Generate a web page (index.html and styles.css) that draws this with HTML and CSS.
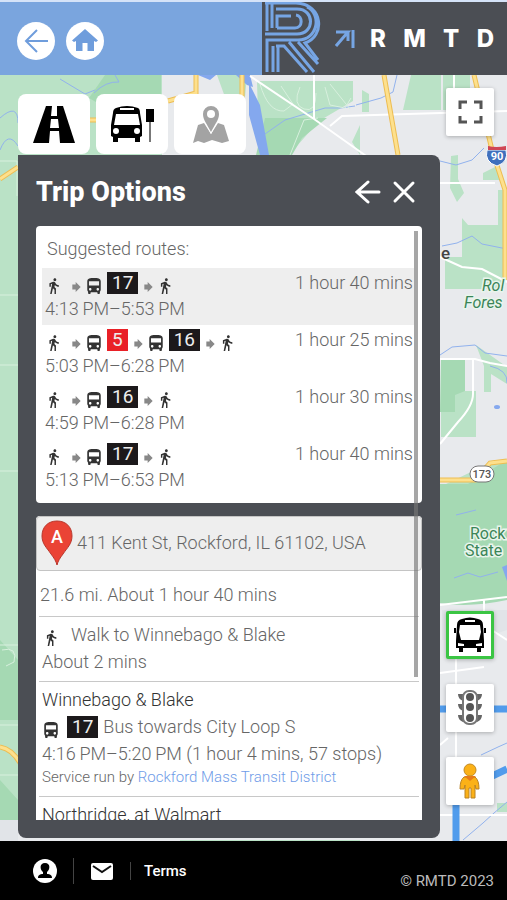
FILE: index.html
```html
<!DOCTYPE html>
<html lang="en">
<head>
<meta charset="utf-8">
<meta name="viewport" content="width=device-width, initial-scale=1">
<title>RMTD Trip Options</title>
<link rel="stylesheet" href="styles.css">
</head>
<body>
<svg class="sprite" aria-hidden="true">
  <symbol id="walk" viewBox="6 1 14 22"><path d="M13.5 5.500c1.100 0 2-.9 2-2s-.9-2-2-2-2 .9-2 2 .9 2 2 2zM9.800 8.900 7 23h2.100l1.800-8 2.100 2v6h2v-7.500l-2.100-2 .6-3C14.800 12 16.800 13 19 13v-2c-1.900 0-3.500-1-4.300-2.400l-1-1.600c-.4-.6-1-1-1.700-1-.3 0-.5.1-.8.1L6 8.300V13h2V9.600l1.800-.7z"/></symbol>
  <symbol id="bus" viewBox="4 2 16 19"><path d="M4 16c0 .88.39 1.670 1 2.220V20c0 .55.45 1 1 1h1c.55 0 1-.45 1-1v-1h8v1c0 .55.45 1 1 1h1c.55 0 1-.45 1-1v-1.780c.61-.55 1-1.340 1-2.220V6c0-3.500-3.580-4-8-4s-8 .5-8 4v10zm3.500 1c-.83 0-1.500-.67-1.500-1.500S6.670 14 7.500 14s1.500.67 1.500 1.500S8.330 17 7.500 17zm9 0c-.83 0-1.500-.67-1.500-1.500s.67-1.500 1.500-1.500 1.500.67 1.500 1.500-.67 1.500-1.500 1.500zm1.500-6H6V6h12v5z"/></symbol>
  <symbol id="next" viewBox="0 0 10 12"><path d="M0 3h4V0l6 6-6 6V9H0z"/></symbol>
</svg>

<header class="topbar">
  <nav class="topnav">
    <button class="round" aria-label="Back"><svg viewBox="0 0 38 38"><path class="line" d="M31 19H9M20 8 9 19l11 11"/></svg></button>
    <button class="round" aria-label="Home"><svg viewBox="0 0 38 38"><path d="M19 7 32 18.500 30 20l-2-1v10h-6.500v-8h-5v8H10V19l-2 1-2-1.500z"/></svg></button>
  </nav>
  <div class="brand">
    <svg class="brand-mark" viewBox="0 0 60 73" aria-hidden="true">
      <path d="M5 0v29M10 0v26M3 1h31c28 1 29 34 9 40l13 17M14 7h21c18 0 18 25 0 25H3M15 26V14h14M15 26h18c8 0 8-12 1-13M5 70V38h31c20 0 24-26 9-33M11 70V44M16 70V44M14 44h8l23 26M27 40l25 30M36 40l20 22"/>
    </svg>
    <svg class="brand-arrow" viewBox="0 0 20 20" aria-hidden="true"><path d="M1 3h12L1 17M18 1v18M13 3v9"/></svg>
    <div class="brand-name"><span>R</span><span>M</span><span>T</span><span>D</span></div>
  </div>
</header>

<main class="stage">
  <svg class="map" viewBox="0 75 507 766" preserveAspectRatio="xMinYMin slice" aria-hidden="true">
    <rect y="75" width="507" height="766" fill="#e8eaed"/>
    <path class="park" d="M0 75h162v95H0zM0 150h18v670H0zM217 75h30l-2 22h-20zM257 81h96v20l-34 20-30 34h-30zM362 90l7 4v18h-7zM411 75h30v35h-38zM443 75h27v35h-27zM352 142l8-17v30zM451 156l7-1v24l6 14-7 9-7-14zM462 218l6 7h35v64h-58v-32h17zM483 173l16-8v15h-16zM498 190h9v35h-9zM441 391h35v46h-35zM476 345l31 22v17l-16-10v18h-7v-26zM446 484l50-24h11v25h-67zM180 840h180v3H180zM497 803h10v9h-10z"/>
    <path class="wood" d="M105 75h56v30h-60l-12-7zM265 118h62l-25 20-10 17h-36zM441 360h24v31l-10 4v17h-15zM440 484h28l39-24v140q-38 8-67 3zM0 780l18 20v20H0zM0 640l18 20v60H0z"/>
    <path fill="#e1e4e8" d="M0 820h18v21H0zM442 610h65v20l-30 10h-35z"/>
    <path class="water" d="M94 93q12-12 25-11l-4-7M60 79l25 15 10-4M0 118q18-16 18 5M0 150q8-20 18-4M355 106q-14 3-30 2l-40 12-20 14M356 105l25-7 12-6 4-17M440 161l16 4 16-5 12-12M442 246l15-3 15-7 10 8 25 5M440 355l12-8 23-2 10 8 22 3M490 366q18 4 17 17M454 578l14-5 12 4 18-5M456 515l20-5M481 755l17-8 9-4M463 840l20-17 11-10 13-11"/>
    <path fill="#84a8ee" d="M198 75h18l-6 5zM236 75h14l3 12-6-2zM249 83l11 22 9 50h-9l-11-40zM502 567l5-2v16z"/>
    <ellipse cx="497" cy="407" rx="3" ry="2" fill="#84a8ee"/>
    <path class="faint" d="M0 161h17v35M0 295h18M0 365h18M0 471h18M0 645h18M0 725h18M0 775h18M260 84q8 28 24 27l9-7-12-18M300 87q-8 18 4 22t12-16M325 87l5 18 15 3 6-10M290 155l14-35 14-2M330 84l20 25M2 650q16-4 12 12l-8 4"/>
    <path class="road" d="M250 76l64 43 55 39M314 119v-44M330 126l12-10 165-5M454 75v20M440 183h55M440 257l22 10 20 2 25 13M440 359h35l15 4 17 3M473 359v35q0 12-15 28l-18 22M440 605l67-8M440 673l44-6M456 657v183M440 815h67M440 745l8-7M484 600v25l23 15"/>
    <path class="hwy-edge" d="M196 75v18l-28 8M242 75v24M384 75l14 80M474 75l18 75 13 40v90M0 179l18-12M90 195h6M0 747q12 2 20 16M440 480h35l15-17 17-2M88 120h10"/>
    <path class="hwy" d="M196 75v18l-28 8M242 75v24M384 75l14 80M474 75l18 75 13 40v90M0 179l18-12M0 747q12 2 20 16M440 480h35l15-17 17-2M88 120h10"/>
    <path class="transit" d="M440 709h67M456 841v-50l30-12 21-10"/>
    <path fill="#3f70bd" stroke="#fff" d="M487 150h19q3 12-9 16-13-4-10-16z"/>
    <path fill="#cf4654" d="M488 146q8 2 18 0v4h-18z"/>
    <text class="shield" x="497" y="160">90</text>
    <rect x="470" y="466" width="24" height="16" rx="8" fill="#fff" stroke="#777" stroke-width="1"/>
    <text class="route-no" x="482" y="478">173</text>
    <text class="town" x="441" y="259">e</text>
    <text class="place italic" x="482" y="291">Rol</text>
    <text class="place italic" x="464" y="308">Fores</text>
    <text class="place" x="470" y="539">Rock</text>
    <text class="place" x="465" y="556">State</text>
  </svg>

  <div class="workspace">
    <div class="tabs">
      <button class="tab" aria-label="Directions"><svg viewBox="0 0 72 60"><path d="M28 12h17l12 37H15z"/><path class="white" d="M34 12h5v10h-6zM33 25h7l1 9h-9zM32 37h9l1 12H31z"/></svg></button>
      <button class="tab" aria-label="Stops"><svg viewBox="0 0 72 60"><path d="M20 14q11-4 22 0 2 1 2 5l2 12v11l-2 1v5h-5v-4H22v4h-5v-5l-2-1V31l2-12q0-4 3-5z"/><path class="white" d="M24 14h14v2H24zM20 20h22l2 11H18z"/><circle class="white" cx="20" cy="37" r="3"/><circle class="white" cx="41" cy="37" r="3"/><path d="M50 15h8v13h-8z"/><path class="pole" d="M54 28v20"/></svg></button>
      <button class="tab muted" aria-label="Nearby"><svg viewBox="0 0 72 60"><path d="m24 31 6-2 7 11 7-11 6 2 5 16-7 2-10-3-8 3-6-2-5 2z"/><path class="halo" d="M37 12a8 8 0 0 0-8 8c0 6 4 10 8 18 4-8 8-12 8-18a8 8 0 0 0-8-8z"/><circle class="white" cx="37" cy="20" r="4"/></svg></button>
    </div>

    <section class="panel">
      <div class="panel-head">
        <h1>Trip Options</h1>
        <button class="plain" aria-label="Back to search"><svg viewBox="0 0 26 26"><path d="M24 13H3M13 3 2 13l11 10"/></svg></button>
        <button class="plain" aria-label="Close"><svg viewBox="0 0 26 26"><path d="m4 4 18 18M22 4 4 22"/></svg></button>
      </div>

      <div class="results">
        <div class="card routes">
          <h2>Suggested routes:</h2>
          <ul>
            <li class="route selected">
              <div class="legs"><svg class="i first"><use href="#walk"/></svg><svg class="arrow"><use href="#next"/></svg><svg class="i"><use href="#bus"/></svg><b class="line-no">17</b><svg class="arrow"><use href="#next"/></svg><svg class="i"><use href="#walk"/></svg><span class="duration">1 hour 40 mins</span></div>
              <div class="times">4:13&#8201;PM–5:53&#8201;PM</div>
            </li>
            <li class="route">
              <div class="legs"><svg class="i first"><use href="#walk"/></svg><svg class="arrow"><use href="#next"/></svg><svg class="i"><use href="#bus"/></svg><b class="line-no red">5</b><svg class="arrow"><use href="#next"/></svg><svg class="i"><use href="#bus"/></svg><b class="line-no">16</b><svg class="arrow"><use href="#next"/></svg><svg class="i"><use href="#walk"/></svg><span class="duration">1 hour 25 mins</span></div>
              <div class="times">5:03&#8201;PM–6:28&#8201;PM</div>
            </li>
            <li class="route">
              <div class="legs"><svg class="i first"><use href="#walk"/></svg><svg class="arrow"><use href="#next"/></svg><svg class="i"><use href="#bus"/></svg><b class="line-no">16</b><svg class="arrow"><use href="#next"/></svg><svg class="i"><use href="#walk"/></svg><span class="duration">1 hour 30 mins</span></div>
              <div class="times">4:59&#8201;PM–6:28&#8201;PM</div>
            </li>
            <li class="route">
              <div class="legs"><svg class="i first"><use href="#walk"/></svg><svg class="arrow"><use href="#next"/></svg><svg class="i"><use href="#bus"/></svg><b class="line-no">17</b><svg class="arrow"><use href="#next"/></svg><svg class="i"><use href="#walk"/></svg><span class="duration">1 hour 40 mins</span></div>
              <div class="times">5:13&#8201;PM–6:53&#8201;PM</div>
            </li>
          </ul>
        </div>

        <div class="card steps">
          <div class="address">
            <svg class="pin" viewBox="0 0 32 46" aria-hidden="true"><path d="M16 1C7 1 1 7 1 16c0 8 5 12 9 18 3 4 5 7 6 11 1-4 3-7 6-11 4-6 9-10 9-18 0-9-6-15-15-15z"/><text x="16" y="23">A</text></svg>
            <span>411 Kent St, Rockford, IL 61102, USA</span>
          </div>
          <p class="summary">21.6 mi. About 1 hour 40 mins</p>
          <div class="step">
            <div class="step-line"><svg class="i step-walk"><use href="#walk"/></svg><span>Walk to Winnebago &amp; Blake</span></div>
            <div class="step-line">About 2 mins</div>
          </div>
          <div class="step">
            <div class="step-line stop">Winnebago &amp; Blake</div>
            <div class="step-line"><svg class="i step-bus"><use href="#bus"/></svg><b class="line-no">17</b><span>Bus towards City Loop S</span></div>
            <div class="step-line">4:16&#8201;PM–5:20&#8201;PM (1 hour 4 mins, 57 stops)</div>
            <div class="agency">Service run by <a href="#agency">Rockford Mass Transit District</a></div>
          </div>
          <div class="step">
            <div class="step-line stop">Northridge, at Walmart</div>
          </div>
        </div>
        <div class="thumb"></div>
      </div>
    </section>
  </div>

  <div class="controls">
    <button class="control" aria-label="Full screen"><svg viewBox="0 0 48 48"><path class="corners" d="M14 21v-7h7M28 14h7v7M35 28v6h-7M21 34h-7v-6"/></svg></button>
    <button class="control live" aria-label="Live buses"><svg viewBox="0 0 42 42"><path d="M13 5q8-3 16 0 5 1 5 6l1 16v7h-3v4h-4v-4H14v4h-4v-4H7v-7l1-16q0-5 5-6zM5 14h2v5H5zM35 14h2v5h-2z"/><path class="white" d="M16 6h10v2H16zM11 11h20l1 7-2 8H12l-2-8zM9 29l6 1v2H9zM33 29l-6 1v2h6z"/></svg></button>
    <button class="control" aria-label="Traffic"><svg viewBox="0 0 48 48"><path fill="#666" d="M12 10h24q0 5-5 7H17q-5-2-5-7zM12 20h24q0 5-5 7H17q-5-2-5-7zM12 31h24q0 5-5 7H17q-5-2-5-7z"/><rect x="17" y="7" width="14" height="33" rx="6" fill="#fff" stroke="#777" stroke-width="2"/><g fill="#555"><circle cx="24" cy="13" r="4"/><circle cx="24" cy="23" r="4"/><circle cx="24" cy="34" r="4"/></g></svg></button>
    <button class="control" aria-label="Street view"><svg viewBox="0 0 48 48"><path fill="#fbb117" stroke="#b98225" d="M18 20h11q4 3 4 12h-3l-1-4v13h-4V31h-2v10h-4V28l-1 4h-4q0-9 4-12z"/><circle cx="24" cy="13" r="6" fill="#fbb117" stroke="#c28a24"/><path fill="#e77a18" d="m18 19 6 5 6-5z"/></svg></button>
  </div>
</main>

<footer class="footer">
  <a href="#account" aria-label="Account"><svg viewBox="0 0 26 26"><circle cx="13" cy="13" r="12" fill="#fff"/><path d="M13 5c6 0 5 7 2 9v2c3 0 5 1 5 4H6c0-3 2-4 5-4v-2c-3-2-4-9 2-9z"/></svg></a>
  <a href="#mail" aria-label="Mail"><svg viewBox="0 0 26 26"><rect x="2" y="5" width="22" height="17" rx="2" fill="#fff"/><path d="m4 8 9 6 9-6" fill="none" stroke="#111" stroke-width="2"/></svg></a>
  <a href="#terms">Terms</a>
  <small>© RMTD 2023</small>
</footer>
</body>
</html>
```

FILE: styles.css
```css
* { box-sizing: border-box; }

body {
  margin: 0;
  height: 100vh;
  display: flex;
  flex-direction: column;
  font-family: Roboto, "Liberation Sans", sans-serif;
  font-size: 18px;
  font-weight: 300;
  color: #666;
  background: #000;
}

button {
  border: 0;
  padding: 0;
  cursor: pointer;
}

svg { display: block; }

.sprite { position: absolute; width: 0; height: 0; }

.white { fill: #fff; }

/* Top bar */
.topbar {
  flex: none;
  display: flex;
  height: 75px;
  border-top: 2px solid #d5e3f8;
  background: #7aa5de;
}

.topnav {
  flex: 1;
  display: flex;
  align-items: center;
  gap: 11px;
  padding: 5px 0 0 17px;
}

.round {
  width: 38px;
  height: 38px;
  border-radius: 50%;
  background: #fff;
}

.round svg { fill: #6f9ddc; }
.round .line { fill: none; stroke: #6f9ddc; stroke-width: 2; }

.brand {
  display: flex;
  align-items: center;
  width: 245px;
  padding-right: 13px;
  background: #4b4e54;
}

.brand-mark {
  width: 60px;
  height: 73px;
  fill: none;
  stroke: #76a5e4;
  stroke-width: 3;
}

.brand-arrow {
  width: 20px;
  height: 20px;
  margin-left: 13px;
  fill: none;
  stroke: #76a5e4;
  stroke-width: 3;
}

.brand-name {
  flex: 1;
  display: flex;
  justify-content: space-between;
  margin-left: 15px;
  font: 800 24px/24px Inter, sans-serif;
  color: #fff;
}

/* Map */
.stage {
  position: relative;
  flex: 1;
  min-height: 0;
  display: flex;
  gap: 6px;
  padding: 0 13px 3px 18px;
}

.map { position: absolute; inset: 0; width: 100%; height: 100%; }
.park { fill: #bae2c6; }
.wood { fill: #a5d9b3; }
.water { fill: none; stroke: #91b2ed; stroke-width: 1; }
.faint { fill: none; stroke: #d8f0de; stroke-width: 1; }
.road { fill: none; stroke: #fff; stroke-width: 2; }
.hwy-edge { fill: none; stroke: #edbd52; stroke-width: 5; }
.hwy { fill: none; stroke: #fde08d; stroke-width: 3; }
.transit { fill: none; stroke: #519cec; stroke-width: 7; }
.shield { font: 700 11px Roboto, sans-serif; fill: #fff; text-anchor: middle; }
.route-no { font: 500 11px Roboto, sans-serif; fill: #555; text-anchor: middle; }
.town { font: 500 17px Roboto, sans-serif; fill: #444; }

.place {
  font: 400 16px Roboto, sans-serif;
  fill: #3b8558;
  stroke: #e9f5ec;
  stroke-width: 3;
  paint-order: stroke;
}

.place.italic { font-style: italic; }

.workspace {
  position: relative;
  flex: 1;
  min-width: 0;
  display: flex;
  flex-direction: column;
  padding-top: 19px;
}

.tabs {
  flex: none;
  display: flex;
  gap: 6px;
  padding-bottom: 1px;
}

.tab {
  width: 72px;
  height: 60px;
  border-radius: 8px;
  background: #fff;
}

.tab.muted { fill: #a3a3a3; }
.pole { stroke: #777; stroke-width: 2; }
.halo { stroke: #fff; stroke-width: 2; paint-order: stroke; }

/* Trip panel */
.panel {
  flex: 1;
  min-height: 0;
  display: flex;
  flex-direction: column;
  padding: 0 18px 18px;
  border-radius: 0 8px 8px 8px;
  background: #4b4e54;
}

.panel-head {
  flex: none;
  display: flex;
  align-items: center;
  gap: 10px;
  height: 71px;
  padding: 2px 5px 0 0;
}

h1 {
  flex: 1;
  margin: 0;
  font-size: 27px;
  font-weight: 800;
  color: #fff;
}

.plain { width: 26px; height: 26px; background: none; }
.plain svg { fill: none; stroke: #fff; stroke-width: 3; stroke-linecap: round; }

.results {
  position: relative;
  flex: 1;
  min-height: 0;
  overflow: hidden;
}

.card {
  margin-bottom: 13px;
  border-radius: 4px;
  background: #fff;
}

.thumb {
  position: absolute;
  top: 5px;
  right: 4px;
  width: 4px;
  height: 446px;
  background: #777;
  opacity: 0.65;
}

.routes { padding: 0 8px 7px 6px; }

h2 {
  margin: 0;
  padding: 3px 5px 0;
  font-size: 18px;
  font-weight: 300;
  line-height: 39px;
}

ul { margin: 0; padding: 0; list-style: none; }

.route { height: 57px; padding: 4px 1px 0 3px; }
.selected { background: #eee; }

.legs {
  display: flex;
  align-items: flex-end;
  gap: 6px;
  padding-left: 3px;
}

.i { width: 14px; height: 16px; fill: #333; }
.i.first { width: 18px; padding-right: 5px; }
.arrow { width: 9px; height: 10px; margin-bottom: 2px; fill: #888; }

.line-no {
  padding: 0 5px;
  font-size: 19px;
  font-weight: 400;
  line-height: 22px;
  color: #eee;
  background: #1c191b;
}

.line-no.red { background: #e92027; }

.duration { margin-left: auto; line-height: 22px; }
.times { line-height: 29px; }

.address {
  display: flex;
  align-items: center;
  gap: 4px;
  height: 55px;
  padding: 0 4px 2px;
  border: 1px solid #c4c4c4;
  border-radius: 4px;
  background: #eee;
}

.pin { width: 32px; height: 46px; fill: #ea4335; stroke: #b9372c; }
.pin text { font: 500 18px Roboto, sans-serif; fill: #fff; stroke: none; text-anchor: middle; }

.summary { margin: 0 4px; padding-top: 2px; line-height: 43px; }

.step {
  margin: 0 3px;
  padding: 4px 3px 6px;
  border-top: 1px solid #c8c8c8;
}

.step-line { display: flex; align-items: center; line-height: 27px; }
.step-walk { margin: 6px 12px 0 3px; }
.step-bus { margin: 6px 9px 0 2px; }
.step-line .line-no { margin-right: 5px; }
.stop { color: #333; }
.agency { padding-bottom: 3px; font-size: 15px; line-height: 20px; }
.agency a { color: #6f9ce8; text-decoration: none; }

/* Map controls */
.controls {
  position: relative;
  flex: none;
  display: flex;
  flex-direction: column;
  gap: 25px;
  padding: 13px 0 33px;
}

.control {
  width: 48px;
  height: 48px;
  border-radius: 2px;
  background: #fff;
  box-shadow: 0 1px 4px #0004;
}

.control:first-child { margin-bottom: auto; }
.control.live { border: 3px solid #3bc544; }
.corners { fill: none; stroke: #555; stroke-width: 3; }

/* Footer */
.footer {
  flex: none;
  display: flex;
  align-items: center;
  height: 59px;
  padding: 0 13px 0 32px;
  background: #000;
}

.footer a {
  padding-right: 15px;
  font-size: 15px;
  font-weight: 500;
  color: #fff;
  text-decoration: none;
}

.footer a + a { padding-left: 15px; border-left: 1px solid #444; }
.footer a + a + a { padding-left: 13px; }
.footer svg { width: 26px; height: 26px; }

.footer small {
  margin: 20px 0 0 auto;
  font-size: 15px;
  font-weight: 400;
  color: #bbb;
}
```
